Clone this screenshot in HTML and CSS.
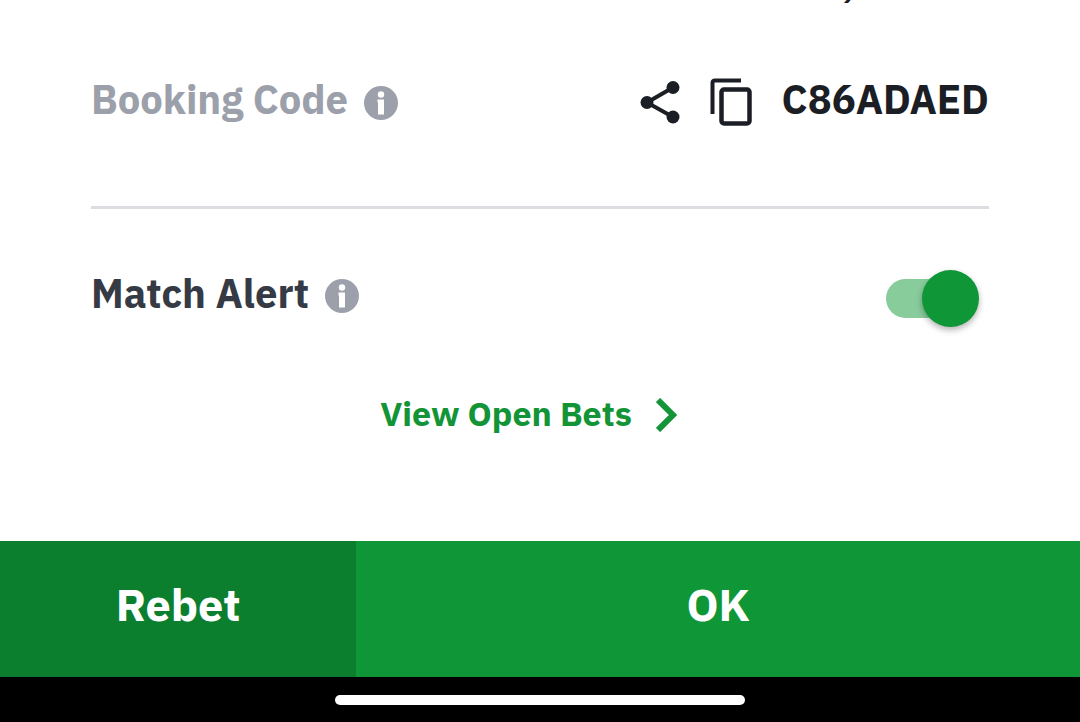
FILE: index.html
```html
<!DOCTYPE html>
<html lang="en">

<head>
    <meta charset="UTF-8">
    <meta name="viewport" content="width=device-width, initial-scale=1.0">
    <title>Booking</title>
    <link rel="stylesheet" href="styles.css">
</head>

<body>
    <main class="ticket">
        <div class="amount"><span>,</span></div>

        <section class="row row-code">
            <div class="name muted">
                <span>Booking Code</span>
                <svg class="info" viewBox="0 0 34 34" aria-hidden="true">
                    <circle cx="17" cy="17" r="17" />
                    <circle class="mark" cx="17" cy="8.5" r="3.2" />
                    <path class="mark" d="M13.5 13.500H20V28.500H14V16.500H13.500z" />
                </svg>
            </div>
            <div class="code">
                <button type="button" class="icon-button" aria-label="Share">
                    <svg width="40" height="44" viewBox="0 0 40 44">
                        <path d="M33 7.500L7 22.500L33 37" fill="none" stroke="#1b1e25" stroke-width="4" />
                        <circle cx="33" cy="7.500" r="6.500" />
                        <circle cx="7" cy="22.500" r="6.500" />
                        <circle cx="33" cy="37" r="6.500" />
                    </svg>
                </button>
                <button type="button" class="icon-button" aria-label="Copy">
                    <svg width="42" height="48" viewBox="0 0 42 48">
                        <path d="M2.500 36V5Q2.500 2.500 5 2.500H31" fill="none" stroke="#1b1e25" stroke-width="4" />
                        <rect x="11.500" y="11.500" width="28" height="34" rx="2.500" fill="none" stroke="#1b1e25" stroke-width="4.500" />
                    </svg>
                </button>
                <span>C86ADAED</span>
            </div>
        </section>

        <section class="row row-alert">
            <div class="name">
                <label for="alert">Match Alert</label>
                <svg class="info" viewBox="0 0 34 34" aria-hidden="true">
                    <circle cx="17" cy="17" r="17" />
                    <circle class="mark" cx="17" cy="8.5" r="3.2" />
                    <path class="mark" d="M13.5 13.500H20V28.500H14V16.500H13.500z" />
                </svg>
            </div>
            <input type="checkbox" id="alert" class="switch" checked>
        </section>

        <a href="#" class="open-bets">
            <span>View Open Bets</span>
            <svg width="22" height="34" viewBox="0 0 22 34" aria-hidden="true">
                <path d="M2 2L17 17L2 32" fill="none" stroke="#129437" stroke-width="6" />
            </svg>
        </a>
    </main>

    <footer class="actions">
        <button type="button" class="rebet">Rebet</button>
        <button type="button" class="ok">OK</button>
    </footer>
    <div class="home"><div class="home-bar"></div></div>
</body>

</html>
```

FILE: styles.css
```css
* {
    box-sizing: border-box;
}

body {
    margin: 0;
    min-height: 100vh;
    display: flex;
    flex-direction: column;
    background-color: #fff;
    color: #1b1e25;
    font-family: "IBM Plex Sans", "Noto Sans", sans-serif;
    font-size: 40px;
    font-weight: 700;
    line-height: 52px;
}

button {
    border: 0;
    padding: 0;
    background: none;
    color: inherit;
    font: inherit;
    cursor: pointer;
}

svg {
    display: block;
    flex: none;
}

.ticket {
    flex: 1;
    padding: 0 91px;
}

/* end of the amount line, scrolled out at the top */
.amount {
    display: flex;
    align-items: flex-end;
    justify-content: flex-end;
    height: 4px;
    padding-right: 134px;
    line-height: 44px;
}

.row {
    display: flex;
    align-items: center;
    justify-content: space-between;
}

.row-code {
    padding: 69px 0 81px;
    border-bottom: 3px solid #dcdde0;
}

.row-alert {
    padding: 49px 10px 64px 0;
    color: #353a45;
}

.name {
    display: flex;
    align-items: center;
    gap: 16px;
}

.muted {
    color: #9ca0ab;
}

.info {
    width: 34px;
    height: 34px;
    margin-top: 7px;
    fill: #9ca0ab;
}

.info .mark {
    fill: #fff;
}

.code {
    display: flex;
    align-items: center;
    gap: 30px;
    height: 52px;
}

.icon-button {
    padding-top: 6px;
    fill: #1b1e25;
}

/* switch */
.switch {
    appearance: none;
    position: relative;
    width: 93px;
    height: 57px;
    margin: 12px 0 0;
    cursor: pointer;
}

.switch::before {
    content: "";
    position: absolute;
    top: 9px;
    left: 0;
    width: 84px;
    height: 39px;
    border-radius: 20px;
    background-color: #88cc9c;
}

.switch::after {
    content: "";
    position: absolute;
    top: 0;
    right: 0;
    width: 57px;
    height: 57px;
    border-radius: 50%;
    background-color: #0f9637;
    box-shadow: 0 3px 6px rgba(0, 0, 0, 0.3);
}

.switch:not(:checked)::after {
    right: 36px;
}

.open-bets {
    display: flex;
    align-items: center;
    justify-content: center;
    gap: 24px;
    margin-right: 22px;
    color: #129437;
    font-size: 34px;
    line-height: 44px;
    text-decoration: none;
}

.open-bets svg {
    margin-top: 4px;
}

.actions {
    display: flex;
    height: 136px;
    color: #fff;
    font-size: 45px;
}

.actions button {
    padding-bottom: 10px;
}

.rebet {
    width: 33%;
    background-color: #0c7f2f;
}

.ok {
    flex: 1;
    background-color: #0f9737;
}

.home {
    display: flex;
    justify-content: center;
    height: 45px;
    padding-top: 18px;
    background-color: #000;
}

.home-bar {
    width: 38%;
    height: 10px;
    border-radius: 5px;
    background-color: #fff;
}
```
